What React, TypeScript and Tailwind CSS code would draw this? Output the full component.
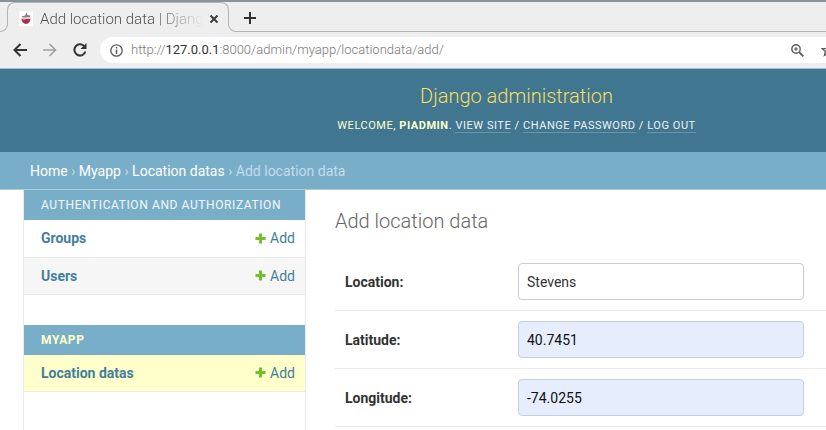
import type { ReactNode } from "react";

function TabStrip() {
  return (
    <div className="flex h-[32px] border-t-2 border-[#87929a] bg-[#eeeeee] *:shrink-0">
      <div className="mt-2 w-2 rounded-br-lg border-r border-b border-[#b4b4b4]" />
      <div className="-ml-px h-2 w-2 rounded-tl-lg border-t border-l border-[#b4b4b4]" />
      <div className="flex w-[206px] items-center border-t border-[#b4b4b4] pt-[2px] pl-1">
        <svg className="mr-[7px] h-[15px] w-[14px] shrink-0" viewBox="0 0 14 15" aria-hidden="true">
          <rect width="14" height="15" rx="1" fill="#fff" />
          <path d="M2.500 5.500L6 4.500L7.500 1.500L8.500 4L11.500 4.500L10.500 6.500H3.500Z" fill="#8f7f84" />
          <path d="M2.600 7.500H11.400C11.800 10.500 9.500 12.700 7 13C4.500 12.700 2.200 10.500 2.600 7.500Z" fill="#a83253" />
          <path d="M3 7.500Q5 8.800 7 7.500T11 7.500" stroke="#f0dce2" fill="none" />
          <path d="M5.500 10.500H8.500" stroke="#743447" fill="none" />
        </svg>
        <span className="w-[163px] bg-linear-to-r from-[#4c4c4c] from-70% to-transparent bg-clip-text text-[15px] leading-5 font-light whitespace-nowrap text-transparent">
          Add location data | Djang
        </span>
        <button className="ml-[6px] flex shrink-0" aria-label="Close tab">
          <svg width="10" height="10" viewBox="0 0 10 10" stroke="#3c3c3c" strokeWidth="2">
            <path d="M1.500 1.500L8.500 8.500M8.500 1.500L1.500 8.500" />
          </svg>
        </button>
      </div>
      <div className="-mr-px h-2 w-2 rounded-tr-lg border-t border-r border-[#b4b4b4]" />
      <div className="mt-2 w-2 rounded-bl-lg border-b border-l border-[#b4b4b4]" />
      <div className="flex flex-1 items-center border-b border-[#b4b4b4] pt-[2px] pl-2">
        <button className="flex" aria-label="New tab">
          <svg width="12" height="12" viewBox="0 0 12 12" stroke="#303030" strokeWidth="2">
            <path d="M6 0V12M0 6H12" />
          </svg>
        </button>
      </div>
    </div>
  );
}

function Toolbar() {
  return (
    <div className="flex h-[37px] items-center overflow-hidden border-b border-[#a9bdc8] bg-[#eeeeee] pl-[13px]">
      <div className="flex shrink-0 items-center gap-4">
        <button className="flex" aria-label="Back">
          <svg width="14" height="14" viewBox="0 0 14 14" fill="none" stroke="#333" strokeWidth="2">
            <path d="M14 7H1.500M7.500 1L1.500 7L7.500 13" />
          </svg>
        </button>
        <button className="flex" aria-label="Forward">
          <svg width="14" height="14" viewBox="0 0 14 14" fill="none" stroke="#a0a0a0" strokeWidth="1.600">
            <path d="M0 7H12.500M6.500 1L12.500 7L6.500 13" />
          </svg>
        </button>
        <button className="flex" aria-label="Reload">
          <svg width="14" height="14" viewBox="0 0 14 14" fill="none" stroke="#333" strokeWidth="2">
            <path d="M12.400 8.500A5.600 5.600 0 1 1 11 3" />
            <path d="M13.500 0V6H7.500Z" fill="#333" stroke="none" />
          </svg>
        </button>
      </div>
      <div className="ml-[13px] flex h-[26px] min-w-0 flex-1 items-center rounded-l-full bg-white pl-[10px]">
        <svg className="mr-2 shrink-0" width="13" height="13" viewBox="0 0 13 13" fill="none" stroke="#5c5c5c" strokeWidth="1.300" aria-hidden="true">
          <circle cx="6.500" cy="6.500" r="5.700" />
          <path d="M6.500 5.500V10M6.500 3V4.500" strokeWidth="1.500" />
        </svg>
        <p className="min-w-0 flex-1 truncate text-[13px] leading-5 font-light text-[#777]">
          http://<span className="font-normal text-[#333]">127.0.0.1</span>:8000/admin/myapp/locationdata/add/
        </p>
        <button className="flex shrink-0" aria-label="Zoom">
          <svg width="13" height="13" viewBox="0 0 13 13" fill="none" stroke="#5c5c5c">
            <circle cx="5" cy="5" r="4.200" strokeWidth="1.400" />
            <path d="M5 3V7M3 5H7" strokeWidth="1.200" />
            <path d="M8 8L12.300 12.300" strokeWidth="1.800" />
          </svg>
        </button>
        <button className="-mr-[9px] ml-[17px] flex shrink-0" aria-label="Bookmark">
          <svg width="14" height="14" viewBox="0 0 14 14" fill="none" stroke="#5c5c5c" strokeWidth="1.400">
            <path d="M7 1.500L8.600 5.300L12.700 5.700L9.600 8.400L10.500 12.400L7 10.300L3.500 12.400L4.400 8.400L1.300 5.700L5.400 5.300Z" />
          </svg>
        </button>
      </div>
    </div>
  );
}

function HeaderLink({ children }: { children: ReactNode }) {
  return (
    <a href="#" className="border-b border-[#6a94aa] text-white/90">
      {children}
    </a>
  );
}

function AppTable({ title, models, current }: { title: string; models: string[]; current?: boolean }) {
  return (
    <table className="mb-[30px] w-full border-collapse">
      <caption
        className={`h-[30px] bg-[#79aec8] pl-[17px] text-left text-xs leading-[30px] tracking-wider uppercase ${
          current ? "font-bold text-[#ffffcc]" : "text-white/90"
        }`}
      >
        {title}
      </caption>
      <tbody>
        {models.map((model) => (
          <tr
            key={model}
            className={`h-[37px] border-b border-[#e8e8e8] text-sm leading-5 text-[#447e9b] ${
              current ? "bg-[#ffffcc]" : "even:bg-[#f6f6f6]"
            }`}
          >
            <th scope="row" className="pl-[17px] text-left font-bold">
              <a href="#">{model}</a>
            </th>
            <td className="pr-[10px]">
              <a href="#" className="flex items-center justify-end gap-1">
                <svg width="11" height="11" viewBox="0 0 11 11" stroke="#70bf2b" strokeWidth="3" aria-hidden="true">
                  <path d="M5.500 0.500V10.500M0.500 5.500H10.500" />
                </svg>
                Add
              </a>
            </td>
          </tr>
        ))}
      </tbody>
    </table>
  );
}

function FormRow({ label, value, autofilled }: { label: string; value: string; autofilled?: boolean }) {
  const id = label.toLowerCase();
  return (
    <div className="flex items-center border-b border-[#eaeaea] py-[10px] pl-[10px]">
      <label htmlFor={id} className="w-[173px] shrink-0 text-sm leading-5 font-bold text-[#333]">
        {label}:
      </label>
      <input
        id={id}
        type="text"
        defaultValue={value}
        className={`h-[37px] w-[286px] rounded border px-2 text-sm ${
          autofilled ? "border-[#c5cfdd] bg-[#e6edfc] text-[#111]" : "border-[#cccccc] bg-white text-[#333]"
        }`}
      />
    </div>
  );
}

export default function App() {
  return (
    <div className="min-h-screen overflow-hidden bg-white font-[Roboto,sans-serif]">
      <TabStrip />
      <Toolbar />
      <header className="flex flex-col items-center bg-[#417690] pt-[13px] pb-4 pl-[207px]">
        <h1 className="text-xl leading-7 font-light text-[#f5dd5d]">Django administration</h1>
        <p className="mt-[6px] text-[11px] leading-5 tracking-wider whitespace-nowrap text-[#ffffcc] uppercase">
          Welcome, <strong>piadmin</strong>. <HeaderLink>View site</HeaderLink> /{" "}
          <HeaderLink>Change password</HeaderLink> / <HeaderLink>Log out</HeaderLink>
        </p>
      </header>
      <nav className="border-b border-[#a9cbdc] bg-[#79aec8] pt-[9px] pb-2 pl-[30px] text-sm leading-5 text-[#c4dce8]" aria-label="Breadcrumbs">
        <a href="#" className="text-white">Home</a> › <a href="#" className="text-white">Myapp</a> ›{" "}
        <a href="#" className="text-white">Location datas</a> › Add location data
      </nav>
      <div className="flex">
        <aside className="ml-[23px] h-60 w-[283px] shrink-0 border-x border-[#eaeaea]">
          <AppTable title="Authentication and Authorization" models={["Groups", "Users"]} />
          <AppTable title="Myapp" models={["Location datas"]} current />
        </aside>
        <main className="min-w-0 flex-1 pl-[29px]">
          <h2 className="pt-[17px] pb-[18px] text-xl leading-7 font-light text-[#666]">Add location data</h2>
          <form>
            <FormRow label="Location" value="Stevens" />
            <FormRow label="Latitude" value="40.7451" autofilled />
            <FormRow label="Longitude" value="-74.0255" autofilled />
          </form>
        </main>
      </div>
    </div>
  );
}
